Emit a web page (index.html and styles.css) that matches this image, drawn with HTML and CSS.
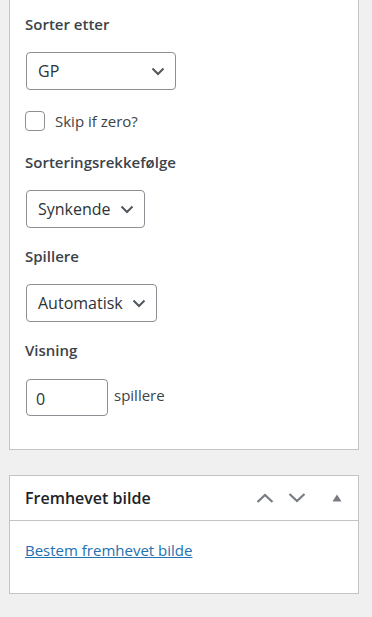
FILE: index.html
```html
<!DOCTYPE html>
<html>

<head>
  <link rel="stylesheet" href="styles.css">
</head>

<body>

  <div class="postbox first">
    <div class="inside">
      <p class="label">Sorter etter</p>
      <div class="select wide">
        <span>GP</span>
        <svg class="chev" width="14" height="9" viewBox="0 0 14 9"><path d="M1.5 1.5 7 7l5.5-5.5" /></svg>
      </div>

      <label class="check"><span class="box"></span>Skip if zero?</label>

      <p class="label">Sorteringsrekkefølge</p>
      <div class="select">
        <span>Synkende</span>
        <svg class="chev" width="14" height="9" viewBox="0 0 14 9"><path d="M1.5 1.5 7 7l5.5-5.5" /></svg>
      </div>

      <p class="label">Spillere</p>
      <div class="select">
        <span>Automatisk</span>
        <svg class="chev" width="14" height="9" viewBox="0 0 14 9"><path d="M1.5 1.5 7 7l5.5-5.5" /></svg>
      </div>

      <p class="label">Visning</p>
      <div class="row">
        <div class="input">0</div>
        <span class="unit">spillere</span>
      </div>
    </div>
  </div>

  <div class="postbox">
    <div class="head">
      <h2>Fremhevet bilde</h2>
      <div class="actions">
        <svg width="18" height="10" viewBox="0 0 18 10"><path d="M1.5 9 9 2l7.5 7" /></svg>
        <svg width="18" height="10" viewBox="0 0 18 10"><path d="M1.5 1 9 8l7.5-7" /></svg>
        <svg class="tri" width="10" height="8" viewBox="0 0 10 8"><polygon points="5,0.5 9.5,7.5 0.5,7.5" /></svg>
      </div>
    </div>
    <div class="inside thumb">
      <a href="#">Bestem fremhevet bilde</a>
    </div>
  </div>

</body>

</html>
```

FILE: styles.css
```css
* {
  box-sizing: border-box;
}

body {
  margin: 0;
  padding: 0 13px 25px 9px;
  background: #f0f0f1;
  font-family: "Open Sans", "Noto Sans", sans-serif;
  font-size: 15px;
  color: #3c434a;
}

.postbox {
  background: #fff;
  border: 1px solid #c3c4c7;
  margin-top: 25px;
}

.postbox.first {
  border-top: none;
  margin-top: 0;
}

.inside {
  padding: 14px 15px 33px;
}

.label {
  margin: 0;
  line-height: 20px;
  font-weight: 600;
  color: #3c434a;
}

.select {
  display: inline-flex;
  align-items: center;
  justify-content: space-between;
  gap: 9px;
  height: 38px;
  margin: 18px 1px;
  padding: 0 10px 0 11px;
  border: 1px solid #8c8f94;
  border-radius: 4px;
  font-size: 16px;
  color: #2c3338;
}

.select.wide {
  width: 150px;
  margin-bottom: 21px;
}

.chev {
  fill: none;
  stroke: #50575e;
  stroke-width: 2;
}

.check {
  display: flex;
  align-items: center;
  gap: 10px;
  margin: 0 0 21px;
  line-height: 20px;
}

.box {
  width: 20px;
  height: 20px;
  border: 1px solid #8c8f94;
  border-radius: 4px;
}

.row {
  display: flex;
  align-items: center;
  gap: 6px;
  margin: 19px 1px 0;
}

.input {
  width: 82px;
  height: 37px;
  padding: 8px 9px 0;
  border: 1px solid #8c8f94;
  border-radius: 4px;
  font-size: 16px;
  color: #2c3338;
}

.unit {
  margin-top: -6px;
}

.postbox + .postbox {
  margin-top: 25px;
}

.head {
  display: flex;
  align-items: center;
  justify-content: space-between;
  height: 45px;
  padding: 0 16px 0 15px;
  border-bottom: 1px solid #c3c4c7;
}

.head h2 {
  margin: 0;
  font-size: 16px;
  font-weight: 600;
  color: #1d2327;
}

.actions {
  display: flex;
  align-items: center;
  gap: 14px;
}

.actions svg {
  fill: none;
  stroke: #787c82;
  stroke-width: 2.2;
}

.actions .tri {
  margin-left: 12px;
  fill: #787c82;
  stroke: none;
}

.thumb {
  padding: 19px 15px 33px;
  line-height: 20px;
}

.thumb a {
  color: #2271b1;
  text-decoration: underline;
}
```
